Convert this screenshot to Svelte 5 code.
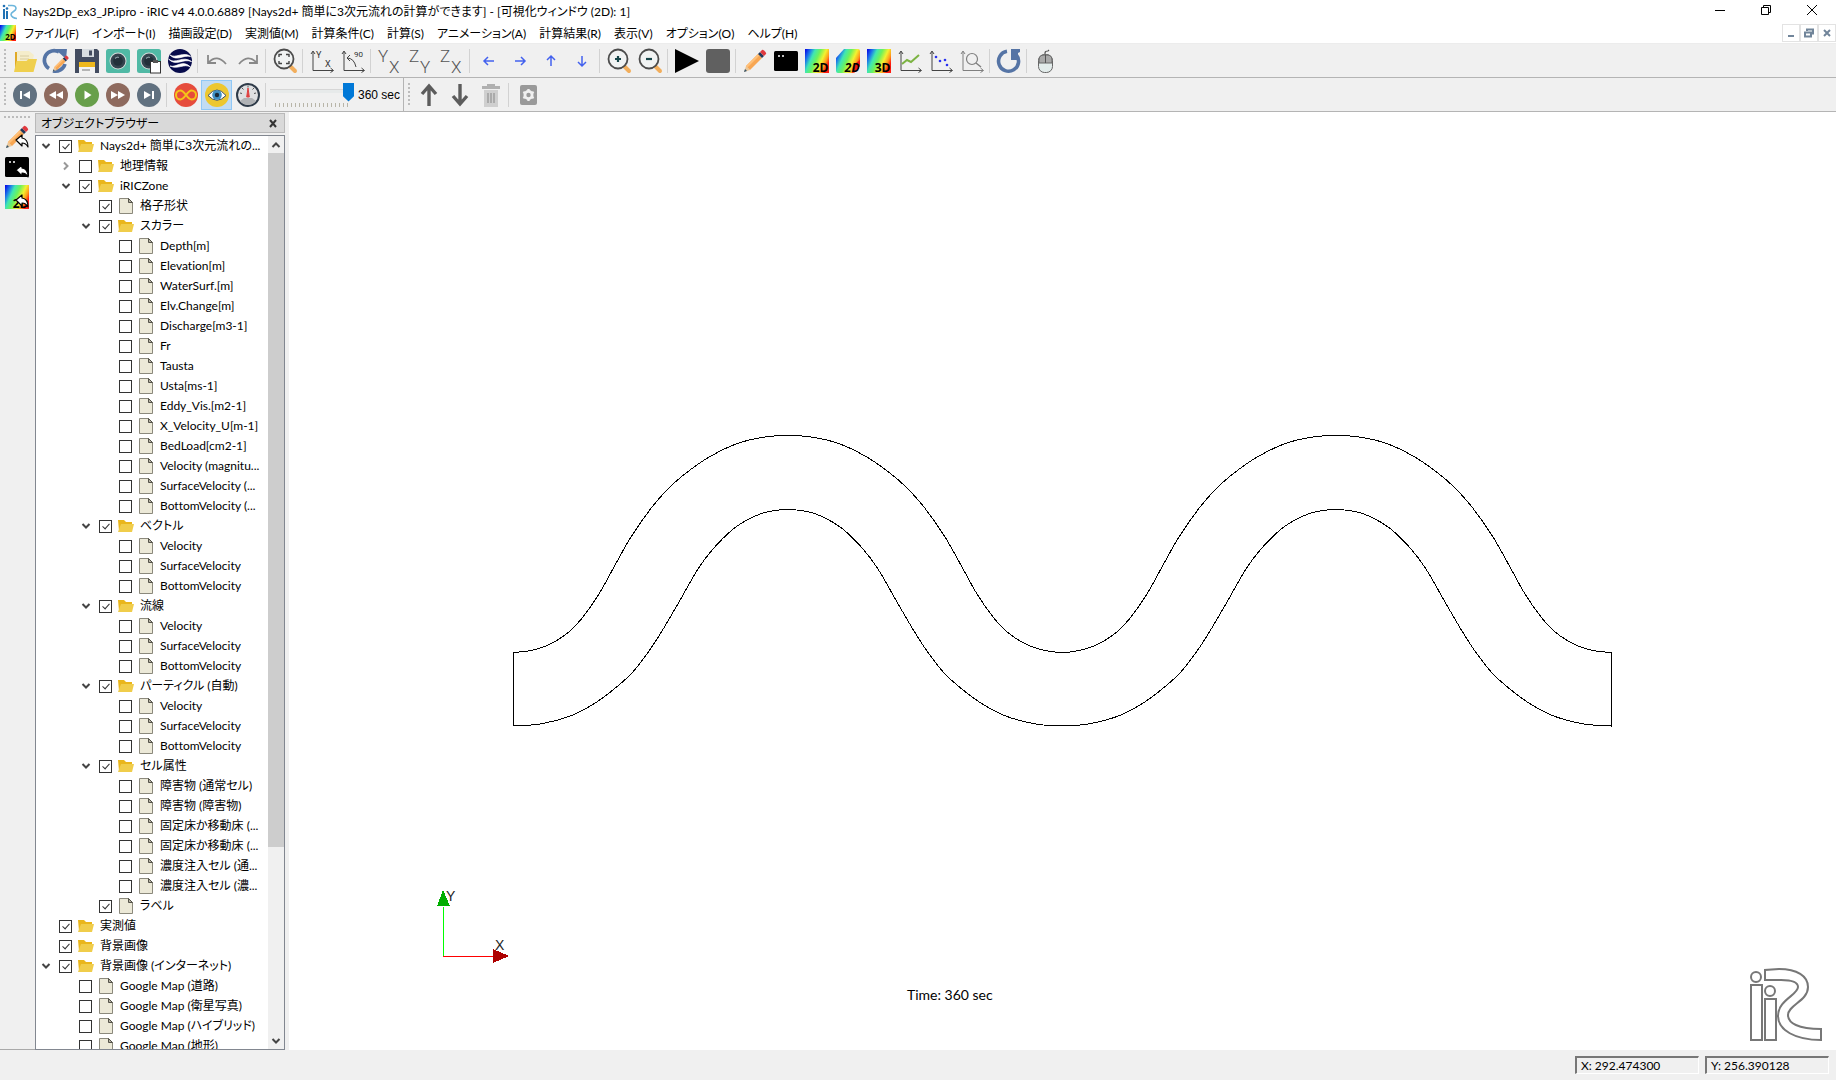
<script>
  const pencil = '<path d="M1 23l2-6 4 4z" fill="#e9c79a"/><path d="M1 23l1-3 2 2z" fill="#34536b"/><path d="M3 17L15 5l4 4L7 21z" fill="#f7a653"/><path d="M3 17L15 5l1.500 1.500L4.500 18.500z" fill="#ffc078"/><path d="M15 5l2-2 4 4-2 2z" fill="#23395b"/><path d="M17 3l2-2c1-1 5 3 4 4l-2 2z" fill="#e0393e"/>';
  const terminal = '<rect y="2" width="24" height="20" rx="1.500" fill="#000"/><circle cx="5" cy="7" r="1" fill="#fff"/><circle cx="9" cy="7" r="1" fill="#fff"/>';
  const rainbow = '<defs><linearGradient id="rainbow" x1="0" y1="0.100" x2="1" y2="0.550"><stop offset="0" stop-color="#0a10e8"/><stop offset=".18" stop-color="#1f7fe8"/><stop offset=".33" stop-color="#3fe6b4"/><stop offset=".52" stop-color="#6cf25c"/><stop offset=".72" stop-color="#f2f230"/><stop offset=".88" stop-color="#ff9a1a"/><stop offset="1" stop-color="#ff1a10"/></linearGradient></defs>';
  const word = (t, style = '') => `<text x="23.500" y="23" text-anchor="end" font-family="Open Sans, sans-serif" font-weight="700" font-size="12" ${style}>${t}</text>`;
  const reply = '<path d="M11 15l6-5v3q6 1 6 9q-2-4-6-4v3z" fill="#fff" stroke="#000" stroke-width="1.200" stroke-linejoin="round"/>';
  const letters = (a, b) => `<g font-family="Roboto, sans-serif" font-weight="300" fill="#555"><text x="0" y="13" font-size="17">${a}</text><text x="11" y="24" font-size="17">${b}</text></g>`;
  const axes = '<path d="M3 3v18.500h20M1 5l2-3 2 3M20.500 19l3 2.500-3 2" fill="none" stroke="#444" stroke-width="1"/>';
  const magnifier = (inner) => `<path d="M17 17l5 5" stroke="#f2ae5c" stroke-width="4" stroke-linecap="round"/><circle cx="11" cy="10" r="9.500" fill="#f1f3f3" stroke="#4c4c4c" stroke-width="1.800"/>${inner}`;
  const disc = (color, inner) => `<circle cx="12" cy="12" r="12" fill="${color}"/>${inner}`;
  const lens = '<rect width="24" height="24" rx="2.500" fill="#50b9a5"/><circle cx="12" cy="12" r="8.500" fill="#d5dcdb"/><circle cx="12" cy="12" r="7.500" fill="#34434e"/><circle cx="12" cy="12" r="4.800" fill="#22303a"/><path d="M9 9.500q2-2 4-1" stroke="#8e9da5" stroke-width="1.300" fill="none"/>';
  const arrow = (turn) => `<path transform="rotate(${turn} 12 12)" d="M17 12H7M11 8l-4 4 4 4" fill="none" stroke="#4361ee" stroke-width="1.500"/>`;
  const curl = '<path d="M3 6v8h8M3.500 13.500Q12 4.500 21 15" fill="none" stroke="#888" stroke-width="1.800"/>';

  const icons = {
    open: '<path d="M2 3h7l2 3v15H2z" fill="#e0a926"/><path d="M4 2h12l5 4-3 13H4z" fill="#f5edcb"/><path d="M7 7h9M7 10h9" stroke="#d9cda0"/><path d="M3.500 12h10l2-2H24l-3.500 13H1z" fill="#efcf4e"/>',
    reload: '<path d="M5 19.500A9.500 9.500 0 0 1 15 3M21 15a10 10 0 0 1-12 7" fill="none" stroke="#5574a5" stroke-width="3.600"/><path d="M11 0h12l-1 10z" fill="#5574a5"/><g transform="translate(8 6) scale(.72)">' + pencil + '</g>',
    save: '<path d="M0 0h22l2 2v22H0z" fill="#434c60"/><path d="M7 0h12v8H7z" fill="#d7dce0"/><path d="M14 1.500h3v5h-3z" fill="#434c60"/><path d="M4 13h16v11H4z" fill="#f2f2f2"/><path d="M4 13h16v5H4z" fill="#efb81c"/><path d="M7 21h8" stroke="#777"/>',
    camera: lens,
    copy: lens + '<rect x="13.500" y="12.500" width="10" height="11.500" fill="#fff" stroke="#333"/><path d="M16 11h5v3h-5z" fill="#555"/>',
    earth: disc('#070b4c', '<path d="M2 6C7 10 16 2 22.500 7.500 15 5.500 9 13 2 6zM.5 10c7 6 14-4 23 2.500C15 9 8 18 .5 10zM2 17c7 2 12-7 20.500 1C16 14 10 21 2 17z" fill="#fff" stroke="#fff" stroke-width=".7"/>'),
    undo: curl,
    redo: `<g transform="translate(24 0) scale(-1 1)">${curl}</g>`,
    fit: magnifier('<path d="M6 8V5.500h3M13 5.500h3V8M16 12v2.500h-3M9 14.500H6V12" fill="none" stroke="#444" stroke-width="1.400"/>'),
    axisxy: axes + '<g font-family="Roboto" font-size="9" fill="#333"><text x="6" y="9">Y</text><text x="15" y="18">X</text></g>',
    axis90: axes + '<path d="M6 9q7 0 9 9M9 6L6 9l3 3" fill="none" stroke="#444"/><text x="13" y="8" font-family="Roboto" font-size="8" fill="#333">90</text>',
    yx: letters('Y', 'X'), zy: letters('Z', 'Y'), zx: letters('Z', 'X'),
    left: arrow(0), right: arrow(180), up: arrow(90), down: arrow(270),
    zoomin: magnifier('<path d="M11 7v6M8 10h6" stroke="#17464a" stroke-width="2.200"/>'),
    zoomout: magnifier('<path d="M8 10h6" stroke="#17464a" stroke-width="2.200"/>'),
    run: '<path d="M0 0l24 12L0 24z" fill="#000"/>',
    stop: '<rect width="24" height="24" rx="3" fill="#606060"/>',
    pencil, terminal,
    map2d: rainbow + '<rect width="24" height="24" fill="url(#rainbow)"/>' + word('2D'),
    birdseye: rainbow + '<path d="M8 0h14q2 0 2 2v14q-2 7-8 8H2q-2 0-2-2V9z" fill="url(#rainbow)"/><path d="M24 11v5q-2 7-8 8l4-10z" fill="#f01818"/>' + word('2D', 'font-style="italic"'),
    map3d: rainbow + '<rect width="24" height="24" fill="url(#rainbow)"/>' + word('3D'),
    chart: axes + '<path d="M4 15l5-4 4 2 8-7" fill="none" stroke="#7cb342" stroke-width="2"/>',
    scatter: axes + '<g fill="#2a32f0"><circle cx="7" cy="8" r="1.300"/><circle cx="11" cy="12" r="1.300"/><circle cx="16" cy="11" r="1.300"/><circle cx="18" cy="16" r="1.300"/></g>',
    verify: '<g opacity=".65">' + axes + '<circle cx="12" cy="10" r="5.500" fill="none" stroke="#444" stroke-width="1.200"/><path d="M16 14l5 4" stroke="#444" stroke-width="1.500"/></g>',
    refresh: '<path d="M19 5.500A10 10 0 1 1 10 2.300" fill="none" stroke="#5574a5" stroke-width="3.600"/><path d="M14 0h9v3l-2 1v7h-7z" fill="#5574a5"/>',
    mouse: '<path d="M11 6V4q0-2 3-2l1-1" fill="none" stroke="#555" stroke-width="1.200"/><rect x="4.500" y="5.500" width="14" height="18" rx="6" fill="#e3eceb" stroke="#666"/><path d="M5 14v-3q0-5 5-5h3q5 0 5 5v3z" fill="#a9a9a9" stroke="#666"/><path d="M11.500 6v8" stroke="#555"/>',
    first: disc('#617180', '<path d="M7 8h2v8H7zM17 8v8l-7-4z" fill="#fff"/>'),
    back: disc('#8e6a5e', '<path d="M12 8v8l-7-4zM19 8v8l-7-4z" fill="#fff"/>'),
    play: disc('#689f4b', '<path d="M9.500 7.500v9l7-4.500z" fill="#fff"/>'),
    forward: disc('#8e6a5e', '<path d="M5 8v8l7-4zM12 8v8l7-4z" fill="#fff"/>'),
    last: disc('#617180', '<path d="M15 8h2v8h-2zM7 8v8l7-4z" fill="#fff"/>'),
    infinity: disc('#e64c3c', '<path d="M12 12C9 8 8 7.500 6.500 7.500a4.500 4.500 0 0 0 0 9C8 16.500 9 16 12 12s4-4.500 5.500-4.500a4.500 4.500 0 0 1 0 9C16 16.500 15 16 12 12z" fill="none" stroke="#f5c518" stroke-width="2"/>'),
    eye: disc('#edc72f', '<path d="M3 12.500q9-11 18 0q-9 9.500-18 0z" fill="#fff" stroke="#394c5c"/><circle cx="12" cy="12" r="4.800" fill="#3f8fc4"/><circle cx="12" cy="12" r="2.200" fill="#1c2b38"/>'),
    gauge: '<circle cx="12" cy="12" r="11" fill="#dfe0e2" stroke="#2f3b49" stroke-width="2"/><path d="M4 18a10 10 0 0 0 16 0l-4-3H8z" fill="#b0b2b5"/><path d="M12 2.500v2M4 10l2 .5M20 10l-2 .5M6 5l1.500 1.500M18 5l-1.500 1.500" stroke="#555"/><path d="M12 5l1.300 9h-2.600z" fill="#e04040" stroke="#e04040"/>',
    moveup: '<path d="M12 23V3M5 11l7-8 7 8" fill="none" stroke="#5c5c5c" stroke-width="3.400"/>',
    movedown: '<path d="M12 1v20M5 13l7 8 7-8" fill="none" stroke="#5c5c5c" stroke-width="3.400"/>',
    trash: '<path d="M8 1h8v2h5v3H3V3h5z" fill="#b0b0b0"/><path d="M5 7h14v17H5z" fill="#cfcfcf"/><path d="M9 10v10M12 10v10M15 10v10" stroke="#ababab" stroke-width="2"/>',
    gear: '<rect x="4" y="2" width="17" height="20" rx="2" fill="#9a9a9a"/><circle cx="12.500" cy="12" r="3.500" fill="none" stroke="#f0f0f0" stroke-width="3"/><path d="M12.500 6v12M7.300 9l10.400 6M17.700 9L7.300 15" stroke="#f0f0f0" stroke-width="2.400"/><circle cx="12.500" cy="12" r="2.200" fill="#9a9a9a"/>',
    pencilback: pencil + reply,
    terminalback: terminal + reply,
    mapback: rainbow + '<rect width="24" height="24" fill="url(#rainbow)"/>' + word('2D') + reply
  };

  const mainTools = [
    ['open', 'reload', 'save', 'camera', 'copy', 'earth'],
    ['undo', 'redo'],
    ['fit'],
    ['axisxy', 'axis90'],
    ['yx', 'zy', 'zx'],
    ['left', 'right', 'up', 'down'],
    ['zoomin', 'zoomout'],
    ['run', 'stop'],
    ['pencil', 'terminal', 'map2d', 'birdseye', 'map3d', 'chart', 'scatter', 'verify'],
    ['refresh'],
    ['mouse']
  ];
  const playTools = [
    ['first', 'back', 'play', 'forward', 'last'],
    ['infinity', 'eye', 'gauge']
  ];
  const editTools = [['moveup', 'movedown', 'trash'], ['gear']];

  const menus = ['ファイル(F)', 'インポート(I)', '描画設定(D)', '実測値(M)', '計算条件(C)', '計算(S)', 'アニメーション(A)', '計算結果(R)', '表示(V)', 'オプション(O)', 'ヘルプ(H)'];

  const file = (level, label, checked = false) => ({ level, label, checked, kind: 'file', fold: '' });
  const folder = (level, label, fold = 'open', checked = true) => ({ level, label, checked, kind: 'folder', fold });
  const velocities = ['Velocity', 'SurfaceVelocity', 'BottomVelocity'];
  const files = (level, names) => names.map((n) => file(level, n));
  const tree = $state([
    folder(0, 'Nays2d+ 簡単に3次元流れの...'),
    folder(1, '地理情報', 'closed', false),
    folder(1, 'iRICZone'),
    file(2, '格子形状', true),
    folder(2, 'スカラー'),
    ...files(3, ['Depth[m]', 'Elevation[m]', 'WaterSurf.[m]', 'Elv.Change[m]', 'Discharge[m3-1]', 'Fr', 'Tausta', 'Usta[ms-1]', 'Eddy_Vis.[m2-1]', 'X_Velocity_U[m-1]', 'BedLoad[cm2-1]', 'Velocity (magnitu...', 'SurfaceVelocity (...', 'BottomVelocity (...']),
    folder(2, 'ベクトル'),
    ...files(3, velocities),
    folder(2, '流線'),
    ...files(3, velocities),
    folder(2, 'パーティクル (自動)'),
    ...files(3, velocities),
    folder(2, 'セル属性'),
    ...files(3, ['障害物 (通常セル)', '障害物 (障害物)', '固定床か移動床 (...', '固定床か移動床 (...', '濃度注入セル (通...', '濃度注入セル (濃...']),
    file(2, 'ラベル', true),
    folder(0, '実測値', ''),
    folder(0, '背景画像', ''),
    folder(0, '背景画像 (インターネット)'),
    ...files(1, ['Google Map (道路)', 'Google Map (衛星写真)', 'Google Map (ハイブリッド)', 'Google Map (地形)'])
  ]);

  // Half a meander of each bank; the rest of the channel is its mirror image.
  const outer = [[513, 652.5], [528, 651], [542, 647.5], [556, 641], [570, 631], [583, 617], [599, 594], [614, 567], [631, 537], [652, 507], [671, 486], [690, 470], [711, 456], [736, 444], [761, 437.5], [788, 435.5]];
  const inner = [[513, 726], [540, 724], [569, 716.5], [592, 705], [611, 691.5], [631, 674], [648, 652.5], [662, 631], [679, 602], [698, 569], [713, 549], [732, 530], [748, 519.5], [763, 513], [775, 510.5], [788, 509.5]];
  const mirror = (pts, x) => pts.map(([px, py]) => [2 * x - px, py]).reverse();
  const bank = (half) => {
    const bend = [...half, ...mirror(half, 788).slice(1)];
    return [...bend, ...mirror(bend, 1062).slice(1)];
  };
  // Catmull-Rom spline through the points, as cubic segments
  const smooth = (pts) => pts.slice(0, -1).map((p, i) => {
    const a = pts[i - 1] ?? p, q = pts[i + 1], b = pts[i + 2] ?? q;
    return `C${p[0] + (q[0] - a[0]) / 6} ${p[1] + (q[1] - a[1]) / 6} ${q[0] - (b[0] - p[0]) / 6} ${q[1] - (b[1] - p[1]) / 6} ${q[0]} ${q[1]}`;
  }).join('');
  const top = bank(outer);
  const bottom = bank(inner).reverse();
  const channel = `M${top[0]}${smooth(top)}L${bottom[0]}${smooth(bottom)}Z`;

  let time = $state(92);
</script>

{#snippet icon(name)}
  <svg class="icon" viewBox="0 0 24 24" aria-hidden="true">{@html icons[name]}</svg>
{/snippet}

{#snippet tools(groups)}
  {#each groups as group, i}
    {#if i > 0}<span class="sep"></span>{/if}
    {#each group as name}
      <button class="tool" class:active={name === 'eye'} aria-label={name}>{@render icon(name)}</button>
    {/each}
  {/each}
{/snippet}

<div class="app">
  <header class="titlebar">
    <svg class="logo" viewBox="0 0 16 16" aria-hidden="true">
      <path d="M2 5v10M5 7v8" stroke="#2272b4" stroke-width="2" />
      <circle cx="2" cy="2" r="1.300" fill="#2272b4" /><circle cx="5" cy="4.500" r="1.300" fill="#2272b4" />
      <path d="M6 1.500h4q4 0 4 3c0 3-5 3-5 6 0 2 3 4 6 4" fill="none" stroke="#6db6dc" stroke-width="1.600" />
    </svg>
    <span class="title">Nays2Dp_ex3_JP.ipro - iRIC v4 4.0.0.6889 [Nays2d+ 簡単に3次元流れの計算ができます] - [可視化ウィンドウ (2D): 1]</span>
    <button class="win" aria-label="minimize"><svg viewBox="0 0 12 12"><path d="M1 6.500h10" /></svg></button>
    <button class="win" aria-label="restore"><svg viewBox="0 0 12 12"><path d="M1.500 3.500h7v7h-7zM3.500 3V1.500h7v7H9" /></svg></button>
    <button class="win" aria-label="close"><svg viewBox="0 0 12 12"><path d="M1 1l10 10M11 1L1 11" /></svg></button>
  </header>

  <nav class="menubar">
    <span class="menuicon">{@render icon('map2d')}</span>
    {#each menus as m}<button class="menu">{m}</button>{/each}
    <span class="mdi">
      <button aria-label="minimize window"><svg viewBox="0 0 12 12"><path d="M3 9h6" /></svg></button>
      <button aria-label="restore window"><svg viewBox="0 0 12 12"><path d="M4 4V2.500h6v4H8M2 5.500h6v4H2z" /></svg></button>
      <button aria-label="close window"><svg viewBox="0 0 12 12"><path d="M3 3l6 6M9 3L3 9" /></svg></button>
    </span>
  </nav>

  <div class="toolbar"><span class="grip"></span>{@render tools(mainTools)}</div>
  <div class="toolbar">
    <span class="grip"></span>{@render tools(playTools)}<span class="sep"></span>
    <label class="time">
      <span class="track"><input type="range" min="0" max="92" bind:value={time} /><span class="ticks"></span></span>
      360 sec
    </label>
    <span class="edge"></span><span class="grip"></span>{@render tools(editTools)}
  </div>

  <main>
    <aside class="strip">
      <span class="hgrip"></span>
      {#each ['pencilback', 'terminalback', 'mapback'] as name}
        <button class="tool" aria-label={name}>{@render icon(name)}</button>
      {/each}
    </aside>

    <section class="dock">
      <div class="docktitle">オブジェクトブラウザー<button aria-label="close panel"><svg viewBox="0 0 10 10"><path d="M2 1l6 7M8 1L2 8" /></svg></button></div>
      <div class="frame">
        <ul class="tree">
          {#each tree as row}
            <li class="l{row.level}">
              {#if row.fold}
                <button class="fold {row.fold}" aria-label="expand"><svg viewBox="0 0 10 10"><path d="M1.500 3L5 6.500 8.500 3" /></svg></button>
              {:else}
                <span class="fold"></span>
              {/if}
              <label>
                <input type="checkbox" bind:checked={row.checked} />
                {#if row.kind === 'folder'}
                  <svg class="kind" viewBox="0 0 16 16"><path d="M0 2h6l2 2h6v9H1z" fill="#e9b61c" /><path d="M3 6h13l-2 8H0z" fill="#f0cd4b" /></svg>
                {:else}
                  <svg class="kind" viewBox="0 0 16 16"><path d="M1.500.5h9l4 4v11h-13z" fill="#ece9d8" stroke="#8b897c" /><path d="M10.500.5v4h4z" fill="#b5b2a2" stroke="#55534a" /></svg>
                {/if}
                <span>{row.label}</span>
              </label>
            </li>
          {/each}
        </ul>
        <div class="scroll">
          <button aria-label="scroll up"><svg viewBox="0 0 10 10"><path d="M1.500 7L5 3.500 8.500 7" /></svg></button>
          <div class="rail"><div class="thumb"></div></div>
          <button aria-label="scroll down"><svg viewBox="0 0 10 10"><path d="M1.500 3L5 6.500 8.500 3" /></svg></button>
        </div>
      </div>
    </section>

    <section class="view">
      <svg viewBox="289 112 1547 938" role="img" aria-label="grid outline">
        <path d={channel} class="channel" />
        <path d="M443 956V907" stroke="#0f0" />
        <path d="M443 956H493" stroke="#f00" />
        <path d="M443 890l7 16h-13z" fill="#00ae00" />
        <path d="M509 956l-16-7v14z" fill="#ae0000" />
        <text x="446" y="901" class="axis">Y</text>
        <text x="495" y="950" class="axis">X</text>
        <text x="907" y="1000" class="clock">Time: 360 sec</text>
        <g class="mark">
          <circle cx="1756" cy="977" r="5" /><circle cx="1770" cy="991" r="5" />
          <path d="M1751 985h11v55h-11zM1765 999h11v41h-11z" />
          <path d="M1765 970v10h16c12 0 17 3 17 7 0 8-20 13-20 29 0 14 17 24 43 24v-11c-23 0-33-6-33-14 0-10 20-14 20-28 0-11-11-18-29-18z" />
        </g>
      </svg>
    </section>
  </main>

  <footer>
    <output>X: 292.474300</output>
    <output>Y: 256.390128</output>
  </footer>
</div>

<style>
  :global(body) { margin: 0; }
  .app {
    display: flex; flex-direction: column; height: 100vh; overflow: hidden;
    background: #f0f0f0; color: #000;
    font: 12px/20px Lato, "Noto Sans CJK JP", sans-serif;
    font-feature-settings: "palt"; font-variant-ligatures: none;
  }
  button { padding: 0; border: 0; background: none; color: inherit; font: inherit; font-feature-settings: inherit; }
  svg { display: block; }
  .icon { width: 24px; height: 24px; flex: none; overflow: visible; }

  .titlebar { display: flex; align-items: center; height: 23px; padding-right: 1px; background: #fff; }
  .logo { width: 16px; height: 16px; margin: 0 5px 0 2px; }
  .title { flex: 1; white-space: nowrap; }
  .win { width: 46px; height: 20px; display: grid; place-items: center; align-self: flex-start; }
  .win svg { width: 12px; height: 12px; fill: none; stroke: #000; }
  .menubar { display: flex; align-items: center; height: 20px; background: #fff; border-bottom: 1px solid #ececec; }
  .menuicon { width: 16px; margin-right: 8px; }
  .menuicon :global(.icon) { width: 16px; height: 16px; }
  .menu { margin-right: 13px; padding-top: 1px; white-space: nowrap; }
  .mdi { display: flex; margin-left: auto; }
  .mdi button { width: 18px; height: 18px; border: 1px solid #e3e3e3; display: grid; place-items: center; }
  .mdi svg { width: 12px; height: 12px; fill: none; stroke: #71859a; stroke-width: 2; }

  .toolbar { display: flex; align-items: center; height: 33px; border-bottom: 1px solid #b4b4b4; }
  .tool { width: 31px; height: 30px; flex: none; display: grid; place-items: center; }
  .tool.active { background: #c2dcf3; box-shadow: inset 0 0 0 1px #90c8f6; }
  .sep { width: 1px; height: 24px; margin: 0 3px 0 2px; background: #d2d2d2; }
  .edge { width: 1px; height: 33px; background: #b4b4b4; }
  .grip { width: 2px; height: 24px; margin: 0 3px 0 4px; background: repeating-linear-gradient(#bcbcbc 0 2px, transparent 2px 4px); }
  .time { display: flex; align-items: center; gap: 4px; width: 133px; padding-left: 1px; font-family: "Liberation Sans", sans-serif; white-space: nowrap; }
  .track { display: block; width: 84px; }
  .track input {
    display: block; appearance: none; width: 100%; height: 20px; margin: 0;
    background: linear-gradient(#d6d6d6, #d6d6d6) 0 7px / 100% 1px no-repeat, linear-gradient(#e7eaea, #e7eaea) 0 8px / 100% 3px no-repeat;
  }
  .track input::-webkit-slider-thumb {
    appearance: none; width: 11px; height: 19px; background: #0078d7;
    clip-path: polygon(0 0, 100% 0, 100% 73%, 50% 100%, 0 73%);
  }
  .ticks { display: block; height: 4px; margin: 1px 5px 0; background: repeating-linear-gradient(90deg, #b8b5a8 0 1px, transparent 1px 4px); }

  main { flex: 1; min-height: 0; display: flex; }
  .strip { width: 35px; padding-right: 1px; display: flex; flex-direction: column; align-items: center; border-bottom: 1px solid #a9a9a9; box-sizing: border-box; }
  .hgrip { width: 26px; height: 2px; margin: 4px 0; background: repeating-linear-gradient(90deg, #bcbcbc 0 2px, transparent 2px 4px); }
  .dock { width: 250px; margin-right: 4px; display: flex; flex-direction: column; }
  .docktitle {
    display: flex; justify-content: space-between; align-items: center; height: 17px; margin: 1px 0 2px; padding: 1px 6px 0 5px;
    background: #d9d9d9; border: 1px solid #b9b9b9;
  }
  .docktitle svg { width: 10px; height: 10px; fill: none; stroke: #333; stroke-width: 2; }
  .frame { flex: 1; min-height: 0; display: flex; background: #fff; border: 1px solid #828790; }
  .tree { flex: 1; min-width: 0; margin: 0; padding: 0; list-style: none; overflow: hidden; }
  li { display: flex; align-items: center; height: 20px; }
  .l1 { padding-left: 20px; } .l2 { padding-left: 40px; } .l3 { padding-left: 60px; }
  .fold { width: 20px; height: 20px; display: grid; place-items: center; flex: none; }
  .fold svg, .scroll svg { width: 10px; height: 10px; fill: none; stroke: #444; stroke-width: 2; }
  .fold.closed svg { transform: rotate(-90deg); stroke: #999; }
  li label { display: flex; align-items: center; white-space: nowrap; }
  li input { appearance: none; box-sizing: border-box; position: relative; width: 13px; height: 13px; margin: 0 6px 0 3px; border: 1px solid #333; background: #fff; }
  li input:checked::after {
    content: ""; position: absolute; left: 4px; top: 1px; width: 3px; height: 6px;
    border: solid #333; border-width: 0 1px 1px 0; transform: rotate(42deg);
  }
  .kind { width: 16px; height: 16px; margin-right: 6px; }
  .scroll { width: 16px; display: flex; flex-direction: column; background: #f0f0f0; }
  .scroll button { height: 17px; display: grid; place-items: center; }
  .rail { flex: 1; }
  .thumb { height: 79%; background: #cdcdcd; }

  .view { flex: 1; min-width: 0; background: #fff; }
  .view svg { width: 100%; height: 100%; }
  .view path { shape-rendering: crispEdges; }
  .view .channel { fill: none; stroke: #000; }
  .axis { font: 14px "Liberation Sans", sans-serif; fill: #222; }
  .clock { font: 14px Lato, sans-serif; fill: #000; }
  .view .mark { fill: none; stroke: #777; stroke-width: 2; }
  .view .mark path { shape-rendering: auto; }

  footer { display: flex; justify-content: flex-end; align-items: center; gap: 6px; height: 30px; padding-right: 7px; }
  output { width: 124px; height: 18px; padding-left: 4px; box-sizing: border-box; border: solid; border-width: 2px 1px 1px 2px; border-color: #777 #fff #fff #777; line-height: 15px; }
</style>
